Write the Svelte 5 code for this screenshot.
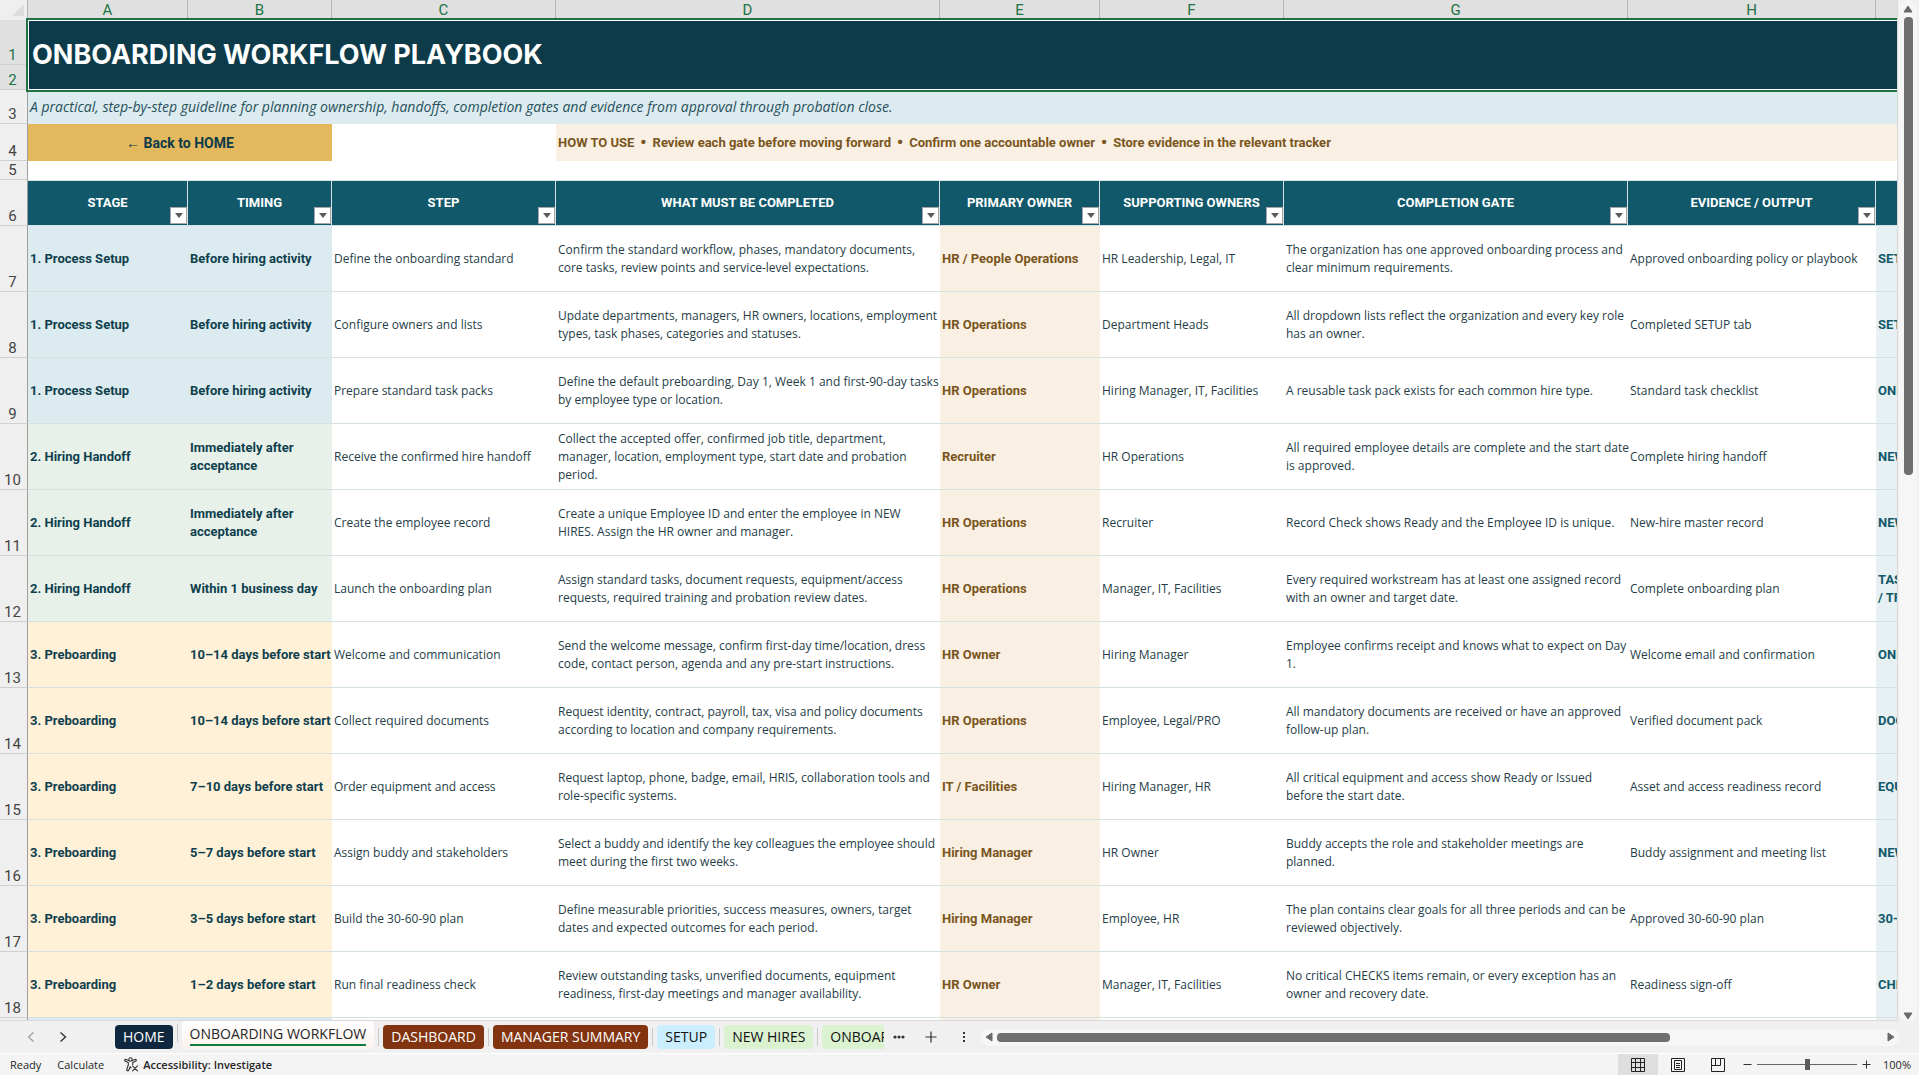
<script>
	const columns = ['A', 'B', 'C', 'D', 'E', 'F', 'G', 'H', ''];

	const headings = [
		'STAGE',
		'TIMING',
		'STEP',
		'WHAT MUST BE COMPLETED',
		'PRIMARY OWNER',
		'SUPPORTING OWNERS',
		'COMPLETION GATE',
		'EVIDENCE / OUTPUT'
	];

	// every row: stage colour, then the cells A to I
	const rows = [
		['setup', '1. Process Setup', 'Before hiring activity', 'Define the onboarding standard', 'Confirm the standard workflow, phases, mandatory documents,\ncore tasks, review points and service-level expectations.', 'HR / People Operations', 'HR Leadership, Legal, IT', 'The organization has one approved onboarding process and\nclear minimum requirements.', 'Approved onboarding policy or playbook', 'SETUP'],
		['setup', '1. Process Setup', 'Before hiring activity', 'Configure owners and lists', 'Update departments, managers, HR owners, locations, employment\ntypes, task phases, categories and statuses.', 'HR Operations', 'Department Heads', 'All dropdown lists reflect the organization and every key role\nhas an owner.', 'Completed SETUP tab', 'SETUP'],
		['setup', '1. Process Setup', 'Before hiring activity', 'Prepare standard task packs', 'Define the default preboarding, Day 1, Week 1 and first-90-day tasks\nby employee type or location.', 'HR Operations', 'Hiring Manager, IT, Facilities', 'A reusable task pack exists for each common hire type.', 'Standard task checklist', 'ONBOARDING'],
		['handoff', '2. Hiring Handoff', 'Immediately after\nacceptance', 'Receive the confirmed hire handoff', 'Collect the accepted offer, confirmed job title, department,\nmanager, location, employment type, start date and probation\nperiod.', 'Recruiter', 'HR Operations', 'All required employee details are complete and the start date\nis approved.', 'Complete hiring handoff', 'NEW HIRES'],
		['handoff', '2. Hiring Handoff', 'Immediately after\nacceptance', 'Create the employee record', 'Create a unique Employee ID and enter the employee in NEW\nHIRES. Assign the HR owner and manager.', 'HR Operations', 'Recruiter', 'Record Check shows Ready and the Employee ID is unique.', 'New-hire master record', 'NEW HIRES'],
		['handoff', '2. Hiring Handoff', 'Within 1 business day', 'Launch the onboarding plan', 'Assign standard tasks, document requests, equipment/access\nrequests, required training and probation review dates.', 'HR Operations', 'Manager, IT, Facilities', 'Every required workstream has at least one assigned record\nwith an owner and target date.', 'Complete onboarding plan', 'TASKS\n/ TRAINING'],
		['pre', '3. Preboarding', '10–14 days before start', 'Welcome and communication', 'Send the welcome message, confirm first-day time/location, dress\ncode, contact person, agenda and any pre-start instructions.', 'HR Owner', 'Hiring Manager', 'Employee confirms receipt and knows what to expect on Day\n1.', 'Welcome email and confirmation', 'ONBOARDING'],
		['pre', '3. Preboarding', '10–14 days before start', 'Collect required documents', 'Request identity, contract, payroll, tax, visa and policy documents\naccording to location and company requirements.', 'HR Operations', 'Employee, Legal/PRO', 'All mandatory documents are received or have an approved\nfollow-up plan.', 'Verified document pack', 'DOCUMENTS'],
		['pre', '3. Preboarding', '7–10 days before start', 'Order equipment and access', 'Request laptop, phone, badge, email, HRIS, collaboration tools and\nrole-specific systems.', 'IT / Facilities', 'Hiring Manager, HR', 'All critical equipment and access show Ready or Issued\nbefore the start date.', 'Asset and access readiness record', 'EQUIPMENT'],
		['pre', '3. Preboarding', '5–7 days before start', 'Assign buddy and stakeholders', 'Select a buddy and identify the key colleagues the employee should\nmeet during the first two weeks.', 'Hiring Manager', 'HR Owner', 'Buddy accepts the role and stakeholder meetings are\nplanned.', 'Buddy assignment and meeting list', 'NEW HIRES'],
		['pre', '3. Preboarding', '3–5 days before start', 'Build the 30-60-90 plan', 'Define measurable priorities, success measures, owners, target\ndates and expected outcomes for each period.', 'Hiring Manager', 'Employee, HR', 'The plan contains clear goals for all three periods and can be\nreviewed objectively.', 'Approved 30-60-90 plan', '30-60-90'],
		['pre', '3. Preboarding', '1–2 days before start', 'Run final readiness check', 'Review outstanding tasks, unverified documents, equipment\nreadiness, first-day meetings and manager availability.', 'HR Owner', 'Manager, IT, Facilities', 'No critical CHECKS items remain, or every exception has an\nowner and recovery date.', 'Readiness sign-off', 'CHECKS'],
		['first', '', '', '', '', '', '', '', '', '']
	];

	const tabs = [
		{ name: 'HOME', color: 'navy' },
		{ name: 'ONBOARDING WORKFLOW', color: 'plain' },
		{ name: 'DASHBOARD', color: 'rust' },
		{ name: 'MANAGER SUMMARY', color: 'rust' },
		{ name: 'SETUP', color: 'sky' },
		{ name: 'NEW HIRES', color: 'green' },
		{ name: 'ONBOARDING', color: 'green' }
	];

	let active = $state('ONBOARDING WORKFLOW');
	let view = $state('Normal');
	let zoom = $state(100);
</script>

<div class="window">
	<div class="main">
		<div class="sheet">
			<table>
				<colgroup>
					<col class="w-num" />
					<col class="w-a" />
					<col class="w-b" />
					<col class="w-c" />
					<col class="w-d" />
					<col class="w-e" />
					<col class="w-f" />
					<col class="w-g" />
					<col class="w-h" />
					<col class="w-i" />
				</colgroup>
				<thead>
					<tr class="letters">
						<th class="corner"><svg width="12" height="12" viewBox="0 0 12 12"><path d="M12 0V12H0Z" fill="#dcdcdc" /></svg></th>
						{#each columns as letter}
							<th scope="col">{letter}</th>
						{/each}
					</tr>
				</thead>
				<tbody>
					<tr class="r1">
						<th class="num on">1</th>
						<td class="title" colspan="9" rowspan="2">ONBOARDING WORKFLOW PLAYBOOK</td>
					</tr>
					<tr class="r2"><th class="num on">2</th></tr>
					<tr class="r3">
						<th class="num">3</th>
						<td class="intro" colspan="9">A practical, step-by-step guideline for planning ownership, handoffs, completion gates and evidence from approval through probation close.</td>
					</tr>
					<tr class="r4">
						<th class="num">4</th>
						<td class="back" colspan="2"><a href="#home">← Back to HOME</a></td>
						<td></td>
						<td class="howto" colspan="6">HOW TO USE&nbsp; <b>•</b>&nbsp; Review each gate before moving forward&nbsp; <b>•</b>&nbsp; Confirm one accountable owner&nbsp; <b>•</b>&nbsp; Store evidence in the relevant tracker</td>
					</tr>
					<tr class="r5"><th class="num">5</th><td colspan="9"></td></tr>
					<tr class="r6">
						<th class="num">6</th>
						{#each headings as heading}
							<th class="heading" scope="col">
								{heading}
								<button class="filter" aria-label="Filter {heading}"><svg width="8" height="5" viewBox="0 0 8 5"><path d="M0 0H8L4 5Z" fill="#595959" /></svg></button>
							</th>
						{/each}
						<th class="heading"></th>
					</tr>
					{#each rows as [kind, ...cells], i}
						<tr class="data {kind}">
							<th class="num">{i < 12 ? i + 7 : ''}</th>
							{#each cells as cell}
								<td>{cell}</td>
							{/each}
						</tr>
					{/each}
				</tbody>
			</table>
		</div>
		<div class="vscroll">
			<button aria-label="Scroll up"><svg width="10" height="8" viewBox="0 0 10 8"><path d="M5 1L9 7H1Z" fill="#6b6b6b" stroke="#6b6b6b" stroke-linejoin="round" /></svg></button>
			<div class="vthumb"></div>
			<button class="end" aria-label="Scroll down"><svg width="10" height="8" viewBox="0 0 10 8"><path d="M5 7L9 1H1Z" fill="#6b6b6b" stroke="#6b6b6b" stroke-linejoin="round" /></svg></button>
		</div>
	</div>

	<div class="tabbar">
		<div class="steps">
			<button aria-label="Previous sheet"><svg width="8" height="12" viewBox="0 0 8 12"><path d="M6.500 1.500L1.500 6L6.500 10.500" fill="none" stroke="#a0a0a0" stroke-width="1.300" /></svg></button>
			<button aria-label="Next sheet"><svg width="8" height="12" viewBox="0 0 8 12"><path d="M1.500 1.500L6.500 6L1.500 10.500" fill="none" stroke="#333" stroke-width="1.400" /></svg></button>
		</div>
		<nav class="tabs">
			{#each tabs as tab}
				<button class="tab {tab.color}" class:active={active === tab.name} onclick={() => (active = tab.name)}><span>{tab.name}</span></button>
			{/each}
		</nav>
		<button class="more" aria-label="More sheets"><svg width="12" height="4" viewBox="0 0 12 4"><g fill="#333"><circle cx="2" cy="2" r="1.600" /><circle cx="6" cy="2" r="1.600" /><circle cx="10" cy="2" r="1.600" /></g></svg></button>
		<button class="add" aria-label="New sheet"><svg width="12" height="12" viewBox="0 0 12 12"><path d="M6 0.500V11.500M0.500 6H11.500" stroke="#333" stroke-width="1.200" /></svg></button>
		<button class="grip" aria-label="Resize tab bar"><svg width="4" height="12" viewBox="0 0 4 12"><g fill="#333"><rect x="1" y="1" width="2" height="2" /><rect x="1" y="5" width="2" height="2" /><rect x="1" y="9" width="2" height="2" /></g></svg></button>
		<div class="hscroll">
			<button aria-label="Scroll left"><svg width="8" height="10" viewBox="0 0 8 10"><path d="M1 5L7 1V9Z" fill="#6b6b6b" stroke="#6b6b6b" stroke-linejoin="round" /></svg></button>
			<div class="htrack"><div class="hthumb"></div></div>
			<button aria-label="Scroll right"><svg width="8" height="10" viewBox="0 0 8 10"><path d="M7 5L1 1V9Z" fill="#6b6b6b" stroke="#6b6b6b" stroke-linejoin="round" /></svg></button>
		</div>
	</div>

	<footer class="status">
		<span class="state">Ready</span>
		<span class="state">Calculate</span>
		<button class="access">
			<svg width="15" height="15" viewBox="0 0 15 15" fill="none" stroke="#333" stroke-width="1.100" stroke-linejoin="round" stroke-linecap="round">
				<circle cx="6.500" cy="2.500" r="1.700" />
				<path d="M4.500 3.600L2 2.500C0.700 2 0.200 3.800 1.400 4.300L4.300 5.500V8L2.800 12.500C2.500 13.900 4.200 14.400 4.700 13.200L6.300 9.800L7.200 11M8.500 3.600L11 2.500C12.300 2 12.800 3.800 11.600 4.300L8.700 5.500V7.500" />
				<path d="M8.500 8.800L13.500 13.800M13.500 8.800L8.500 13.800" />
			</svg>
			Accessibility: Investigate
		</button>
		<div class="views">
			<button class:picked={view === 'Normal'} aria-label="Normal" onclick={() => (view = 'Normal')}>
				<svg width="14" height="14" viewBox="0 0 14 14" fill="none" stroke="#222"><path d="M0.500 0.500H13.500V13.500H0.500ZM4.500 0.500V13.500M9.500 0.500V13.500M0.500 4.500H13.500M0.500 9.500H13.500" /></svg>
			</button>
			<button class:picked={view === 'Layout'} aria-label="Page layout" onclick={() => (view = 'Layout')}>
				<svg width="14" height="14" viewBox="0 0 14 14" fill="none" stroke="#222"><path d="M0.500 0.500H13.500V13.500H0.500ZM3.500 2.500H10.500V11.500H3.500ZM5 5.500H9M5 7.500H9M5 9.500H9" /></svg>
			</button>
			<button class:picked={view === 'Break'} aria-label="Page break preview" onclick={() => (view = 'Break')}>
				<svg width="14" height="14" viewBox="0 0 14 14" fill="none" stroke="#222"><path d="M0.500 0.500H13.500V13.500H0.500ZM4.500 0.500V7.500M0.500 7.500H9.500V0.500" /></svg>
			</button>
		</div>
		<div class="zoom">
			<button aria-label="Zoom out" onclick={() => (zoom -= 10)}><svg width="9" height="9" viewBox="0 0 9 9"><path d="M0.500 4.500H8.500" stroke="#333" /></svg></button>
			<input type="range" min="0" max="200" bind:value={zoom} aria-label="Zoom" />
			<button aria-label="Zoom in" onclick={() => (zoom += 10)}><svg width="9" height="9" viewBox="0 0 9 9"><path d="M0.500 4.500H8.500M4.500 0.500V8.500" stroke="#333" /></svg></button>
			<output>{zoom}%</output>
		</div>
	</footer>
</div>

<style>
	:global(body) {
		margin: 0;
	}

	* {
		box-sizing: border-box;
	}

	button {
		display: flex;
		align-items: center;
		justify-content: center;
		padding: 0;
		border: 0;
		background: none;
		font: inherit;
		color: inherit;
	}

	.window {
		display: flex;
		flex-direction: column;
		height: 100vh;
		overflow: hidden;
		background: #f0f0f0;
		color: #262626;
		font: 11px/16px 'Open Sans', 'Noto Sans', sans-serif;
	}

	.main {
		display: flex;
		flex: 1;
		min-height: 0;
	}

	.sheet {
		flex: 1;
		min-width: 0;
		overflow: hidden;
		background: #fff;
		border-right: 1px solid #d9d9d9;
		border-bottom: 1px solid #d9d9d9;
	}

	/* grid */
	table {
		width: 2036px;
		table-layout: fixed;
		border-collapse: separate;
		border-spacing: 0;
		font: 13px/18px Roboto, 'Liberation Sans', sans-serif;
		color: #263d48;
	}
	.w-num { width: 28px; }
	.w-a, .w-e, .w-i { width: 160px; }
	.w-b { width: 144px; }
	.w-c { width: 224px; }
	.w-d { width: 384px; }
	.w-f { width: 184px; }
	.w-g { width: 344px; }
	.w-h { width: 248px; }

	th,
	td {
		padding: 0 2px;
		text-align: left;
		white-space: pre;
	}
	.letters th {
		height: 20px;
		padding: 0;
		background: #e0e0e0;
		border-right: 1px solid #b4b4b4;
		color: #217346;
		font-size: 15px;
		font-weight: 400;
		text-align: center;
	}
	.letters .corner {
		background: #efefef;
		text-align: right;
		padding-right: 3px;
		line-height: 0;
	}
	.num {
		padding: 0 2px 0 0;
		background: #efefef;
		border-right: 1px solid #9f9f9f;
		border-bottom: 1px solid #cfcfcf;
		color: #444;
		font-size: 15px;
		font-weight: 400;
		line-height: 17px;
		text-align: center;
		vertical-align: bottom;
	}
	.num.on {
		background: #e0e0e0;
		color: #217346;
	}

	.r1 { height: 45px; }
	.r2 { height: 25px; }
	.r3 { height: 34px; }
	.r4 { height: 37px; }
	.r5 { height: 19px; }
	.r6 { height: 46px; }

	.title {
		position: relative;
		padding-left: 4px;
		background: #0d3b4a;
		color: #fff;
		font: 700 27px/36px Inter, 'Liberation Sans', sans-serif;
	}
	/* selection frame */
	.title::after {
		content: '';
		position: absolute;
		inset: -2px 0 -2px -2px;
		border: 2px solid #217346;
		box-shadow: inset 0 0 0 1px #fff;
	}
	.intro {
		background: #dcebef;
		color: #28505c;
		font: italic 14px/18px 'Open Sans', sans-serif;
	}
	.back {
		background: #e4b85c;
		font-size: 14px;
		font-weight: 700;
		text-align: center;
	}
	.back a {
		color: #0d3b4a;
		text-decoration: none;
	}
	.howto {
		background: #f9f0e3;
		color: #7a5520;
		font-weight: 700;
	}
	.howto b {
		font-family: 'Liberation Sans', sans-serif;
		font-size: 15px;
		line-height: 1;
	}
	.heading {
		position: relative;
		background: #11596a;
		border-right: 1px solid #d5e3e6;
		border-top: 1px solid #d5e3e6;
		border-bottom: 1px solid #d5e3e6;
		color: #fff;
		text-align: center;
		white-space: normal;
	}
	.filter {
		position: absolute;
		right: 0;
		bottom: 1px;
		width: 17px;
		height: 17px;
		border: 1px solid #a6a6a6;
		background: #fff;
	}

	.data { height: 66px; }
	.data td {
		border-bottom: 1px solid #d5e2e2;
		font: 12px/18px 'Open Sans', 'Liberation Sans', sans-serif;
	}
	.data td:nth-child(2),
	.data td:nth-child(3),
	.data td:nth-child(6),
	.data td:nth-child(10) {
		font: 700 13px/18px Roboto, 'Liberation Sans', sans-serif;
	}
	.data td:nth-child(2),
	.data td:nth-child(3) {
		color: #0f3f4d;
	}
	.setup td:nth-child(-n + 3) { background: #dcebef; }
	.handoff td:nth-child(-n + 3) { background: #e7f1ea; }
	.pre td:nth-child(-n + 3) { background: #fff0d8; }
	.first td:nth-child(-n + 3) { background: #dbe8f6; }
	.data td:nth-child(6) {
		background: #f9f0e3;
		color: #7a5520;
	}
	.data td:nth-child(10) {
		background: #e7f0f3;
		color: #11596a;
	}

	/* scroll bars */
	.vscroll {
		display: flex;
		flex-direction: column;
		align-items: center;
		width: 18px;
		margin: 0 2px 0 1px;
		padding: 4px 0 0;
		border-radius: 9px;
		background: #f6f6f6;
	}
	.vscroll button {
		width: 18px;
		height: 10px;
	}
	.vscroll .end {
		margin-top: auto;
	}
	.vthumb {
		width: 9px;
		height: 45%;
		margin-top: 3px;
		border-radius: 4px;
		background: #6f6f6f;
	}
	.hscroll {
		display: flex;
		flex: 1;
		align-items: center;
		height: 17px;
		margin: 0 20px 0 15px;
		padding: 0 4px;
		border-radius: 9px;
		background: #f6f6f6;
	}
	.htrack {
		flex: 1;
		margin: 0 4px;
	}
	.hthumb {
		width: 76%;
		height: 9px;
		border-radius: 4px;
		background: #6f6f6f;
	}

	/* sheet tabs */
	.tabbar {
		display: flex;
		align-items: center;
		height: 32px;
	}
	.steps {
		display: flex;
		gap: 24px;
		margin: 0 48px 0 27px;
	}
	.tabs {
		display: flex;
		align-items: center;
		gap: 9px;
		width: 769px;
		height: 32px;
		overflow: hidden;
		font-size: 14px;
		line-height: 20px;
		white-space: nowrap;
	}
	.tab {
		position: relative;
		flex: none;
		height: 24px;
		padding: 0 8px;
		border-radius: 4px;
	}
	.tab + .tab::before {
		content: '';
		position: absolute;
		left: -5px;
		top: 3px;
		width: 1px;
		height: 18px;
		background: #c8c8c8;
	}
	.navy { background: #0f2840; color: #fff; }
	.rust { background: #823410; color: #fff; }
	.sky { background: #cbeefe; color: #111; }
	.green { background: #dbf2d1; color: #111; }
	.plain { background: #fdf1ec; }
	.tab.active {
		align-self: flex-start;
		height: 28px;
		background: linear-gradient(#fff, #fdf3ee);
		font-weight: 500;
	}
	.tab.active span {
		border-bottom: 2px solid #107c41;
	}
	.more { width: 12px; margin-left: 9px; }
	.add { margin-left: 20px; }
	.grip { margin-left: 25px; }

	/* status bar */
	.status {
		display: flex;
		align-items: center;
		height: 22px;
		padding-left: 10px;
		border-top: 1px solid #fff;
		background: #f4f4f4;
	}
	.state {
		margin-right: 16px;
	}
	.access {
		gap: 4px;
		margin-left: 4px;
		font-weight: 600;
	}
	.views {
		display: flex;
		align-self: stretch;
		margin-left: auto;
	}
	.views button {
		width: 40px;
	}
	.views .picked {
		background: #dedede;
	}
	.zoom {
		display: flex;
		align-items: center;
		gap: 5px;
		margin: 0 8px 0 5px;
	}
	.zoom output {
		margin-left: 7px;
	}
	input[type='range'] {
		width: 100px;
		height: 12px;
		margin: 0;
		appearance: none;
		background: linear-gradient(#666, #666) center / 100% 1px no-repeat;
	}
	input[type='range']::-webkit-slider-thumb {
		appearance: none;
		width: 5px;
		height: 11px;
		background: #5c5c5c;
	}
</style>
